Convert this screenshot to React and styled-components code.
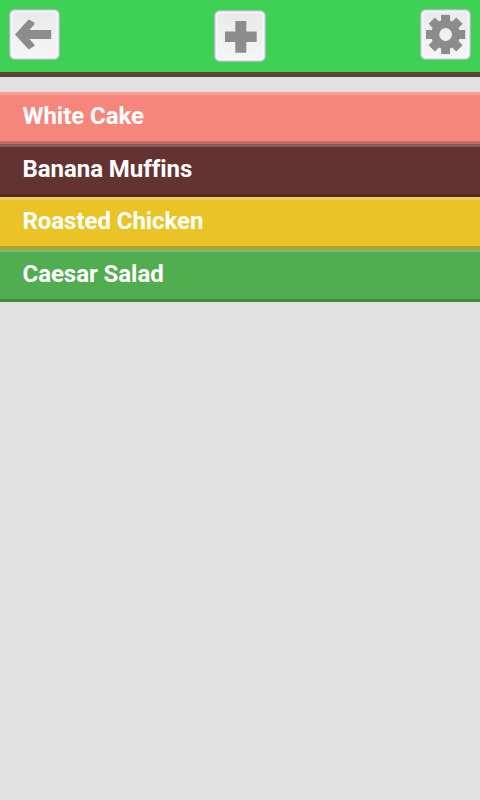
import React from "react";
import styled, { createGlobalStyle } from "styled-components";

const GlobalStyle = createGlobalStyle`
  * { box-sizing: border-box; }
  body {
    margin: 0;
    background: #e1e1e1;
    font-family: Roboto, "Liberation Sans", sans-serif;
  }
`;

const Screen = styled.div`
  min-height: 100vh;
  background: #e1e1e1;
`;

const Toolbar = styled.header`
  display: flex;
  justify-content: space-between;
  align-items: flex-start;
  height: 77px;
  padding: 9px 9px 0;
  background: #3fd153;
  border-bottom: 5px solid #57453a;
`;

const IconButton = styled.button`
  display: block;
  width: ${({ $size }) => $size}px;
  height: ${({ $size }) => $size}px;
  margin: ${({ $drop }) => $drop || 0}px 0 0;
  padding: 0;
  border: 1px solid #a9bac0;
  border-radius: 6px;
  background: linear-gradient(#e9e9e9, #f6f6f7);
  box-shadow: inset 0 0 0 1px #d9dfe6, inset 0 0 2px 2px #fbfbff;

  svg {
    display: block;
    margin: -1px;
    fill: #8c8c8c;
  }
`;

const RecipeList = styled.ul`
  margin: 15px 0 0;
  padding: 0;
  list-style: none;
`;

const Recipe = styled.li`
  height: ${({ $height }) => $height}px;
  padding-left: 22.5px;
  border-top: 3px solid ${({ $light }) => $light};
  border-bottom: 3px solid ${({ $dark }) => $dark};
  background: ${({ $color }) => $color};
  color: #fff;
  font-size: 24px;
  font-weight: 700;
  font-variant-ligatures: none;
  letter-spacing: -0.05px;
  line-height: ${({ $line }) => $line}px;
  white-space: nowrap;
`;

const recipes = [
  { name: "White Cake", height: 52, line: 42, color: "#f6867b", light: "#f89e95", dark: "#c56b62" },
  { name: "Banana Muffins", height: 53, line: 44, color: "#643331", light: "#835b5a", dark: "#502927" },
  { name: "Roasted Chicken", height: 52, line: 42, color: "#eac427", light: "#eed052", dark: "#bb9d1f" },
  { name: "Caesar Salad", height: 53, line: 44, color: "#51ae50", light: "#74be73", dark: "#418b40" },
];

const BackIcon = () => (
  <svg width="51" height="51" viewBox="0 0 51 51">
    <path d="M6 25.5 19.7 10.4 25.4 13.6V15.4L20.3 21H42.2V30H20.3L25.4 35.4V37L19.7 40.4Z" />
  </svg>
);

const PlusIcon = () => (
  <svg width="52" height="52" viewBox="0 0 52 52">
    <path d="M21.3 11H32.3V21.5H42.7V32H32.3V42.7H21.3V32H11V21.5H21.3Z" />
  </svg>
);

const GearIcon = () => (
  <svg width="51" height="51" viewBox="0 0 51 51">
    <g transform="translate(25.6 25.5)">
      <path
        fillRule="evenodd"
        d="M-14.5 0a14.5 14.5 0 1 0 29 0a14.5 14.5 0 1 0-29 0ZM-6.4 0a6.4 6.4 0 1 1 12.8 0a6.4 6.4 0 1 1-12.8 0Z"
      />
      {[0, 45, 90, 135, 180, 225, 270, 315].map((angle) => (
        <path key={angle} transform={`rotate(${angle})`} d="M-4.5-19.6H4.5V-12H-4.5Z" />
      ))}
    </g>
  </svg>
);

export default function App() {
  return (
    <Screen>
      <GlobalStyle />
      <Toolbar>
        <IconButton $size={51} aria-label="Back"><BackIcon /></IconButton>
        <IconButton $size={52} $drop={1} aria-label="Add recipe"><PlusIcon /></IconButton>
        <IconButton $size={51} aria-label="Settings"><GearIcon /></IconButton>
      </Toolbar>
      <RecipeList>
        {recipes.map(({ name, height, line, color, light, dark }) => (
          <Recipe key={name} $height={height} $line={line} $color={color} $light={light} $dark={dark}>
            {name}
          </Recipe>
        ))}
      </RecipeList>
    </Screen>
  );
}
